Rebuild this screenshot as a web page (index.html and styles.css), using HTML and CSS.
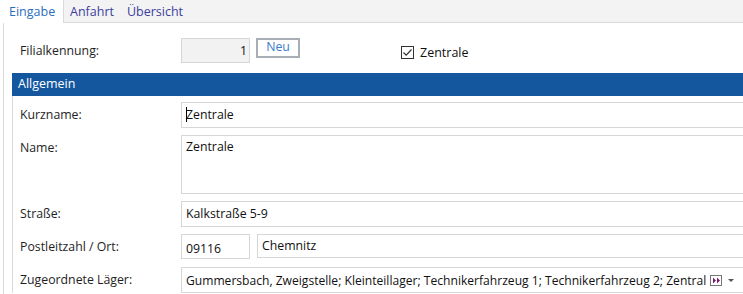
FILE: index.html
```html
<!DOCTYPE html>
<html>
    <head>
        <meta charset="utf-8">
        <title>Filiale</title>
        <link rel="stylesheet" href="styles.css">
    </head>
    <body>
        <nav class="tabs">
            <span class="tab active">Eingabe</span>
            <span class="tab">Anfahrt</span>
            <span class="tab">Übersicht</span>
        </nav>

        <div class="page">
            <div class="top-row">
                <label class="label">Filialkennung:</label>
                <div class="field id-field">1</div>
                <button class="btn-new">Neu</button>
                <label class="check">
                    <span class="box">
                        <svg width="11" height="11" viewBox="0 0 11 11"><path d="M1.5 5.5 L4.2 8.2 L9.5 2.5" fill="none" stroke="#333" stroke-width="1.2"/></svg>
                    </span>
                    Zentrale
                </label>
            </div>

            <section class="group">
                <h2 class="group-title">Allgemein</h2>
                <div class="group-body">
                    <label class="label">Kurzname:</label>
                    <div class="field"><span class="caret"></span>Zentrale</div>

                    <label class="label label-top">Name:</label>
                    <div class="field area">Zentrale</div>

                    <label class="label">Straße:</label>
                    <div class="field">Kalkstraße 5-9</div>

                    <label class="label">Postleitzahl / Ort:</label>
                    <div class="split">
                        <div class="field plz">09116</div>
                        <div class="field ort">Chemnitz</div>
                    </div>

                    <label class="label">Zugeordnete Läger:</label>
                    <div class="field combo">
                        <span class="combo-text">Gummersbach, Zweigstelle; Kleinteillager; Technikerfahrzeug 1; Technikerfahrzeug 2; Zentral</span>
                        <span class="more">
                            <svg width="9" height="7" viewBox="0 0 9 7"><path d="M1 0.5 L4 3.5 L1 6.5 Z M5 0.5 L8 3.5 L5 6.5 Z" fill="#7a1f6e"/></svg>
                        </span>
                        <span class="arrow"></span>
                    </div>
                </div>
            </section>
        </div>
    </body>
</html>
```

FILE: styles.css
```css
body {
    margin: 0; padding: 0;
    background: #FFFFFF;
    color: #1E1E1E;
    font-family: "Segoe UI", "Open Sans", "Noto Sans", sans-serif;
    font-size: 12.3px;
    overflow: hidden;
}

.tabs {
    display: flex;
    height: 22px;
    background: #F3F3F3;
    border-bottom: 1px solid #DADADA;
}
.tab {
    padding: 3px 7px 0 6px;
    color: #3B3D9E;
    line-height: 17px;
    font-size: 12.5px;
}
.tab.active {
    width: 54px;
    padding: 3px 0 0 9px;
    background: #FFFFFF;
    color: #2A6DBB;
    border-right: 1px solid #DADADA;
    height: 20px;
    margin-bottom: -1px;
}

.page {
    margin-left: 3px;
    border-left: 1px solid #DADADA;
    height: 272px;
}

.top-row {
    display: flex;
    align-items: flex-start;
    padding: 15px 0 0 16px;
    height: 35px;
}
.top-row .label {
    width: 161px;
    line-height: 25px;
}
.field {
    box-sizing: border-box;
    height: 26px;
    border: 1px solid #D6D6D6;
    border-right: none;
    background: #FFFFFF;
    color: #111111;
    padding: 0 4px;
    line-height: 23px;
    white-space: nowrap;
    overflow: hidden;
}
.id-field {
    width: 69px;
    height: 25px;
    background: #F2F2F2;
    border-right: 1px solid #D6D6D6;
    text-align: right;
    padding-right: 2px;
}
.btn-new {
    margin-left: 6px;
    width: 44px;
    height: 20px;
    padding: 0 0 2px 0;
    border: 2px solid #A9AEB6;
    background: #FFFFFF;
    color: #3A7BCB;
    font: inherit;
    line-height: 14px;
}
.check {
    display: flex;
    align-items: center;
    gap: 6px;
    margin-left: 101px;
    margin-top: 6px;
    color: #111111;
    font-size: 12.5px;
}
.box {
    box-sizing: border-box;
    width: 13px;
    height: 13px;
    border: 1px solid #333333;
    display: flex;
    align-items: center;
    justify-content: center;
}

.group { margin-left: 8px; }
.group-title {
    margin: 0;
    height: 23px;
    padding-left: 6px;
    background: #14579F;
    color: #FFFFFF;
    font-weight: 400;
    font-size: 12.5px;
    line-height: 22px;
}
.group-body {
    border-left: 1px solid #DADADA;
    display: grid;
    grid-template-columns: 161px 1fr;
    row-gap: 7px;
    padding: 6px 0 0 7px;
}
.group-body .label {
    line-height: 26px;
}
.group-body .label-top { line-height: 26px; align-self: start; }
.area {
    height: 59px;
    padding-top: 0;
    line-height: 22px;
}
.caret {
    display: inline-block;
    width: 1px;
    height: 15px;
    background: #000000;
    vertical-align: -3px;
    margin-right: -1px;
}
.split {
    display: flex;
    gap: 7px;
}
.plz {
    width: 69px;
    height: 25px;
    border-right: 1px solid #D6D6D6;
    padding-top: 2px;
}
.ort {
    flex: 1;
    height: 24px;
    line-height: 21px;
}
.combo {
    display: flex;
    align-items: center;
}
.combo-text {
    flex: none;
    font-size: 12.1px;
}
.more {
    box-sizing: border-box;
    width: 12px;
    height: 11px;
    border: 1px solid #777777;
    display: flex;
    align-items: center;
    justify-content: center;
    margin-left: 4px;
}
.arrow {
    margin-left: 6px;
    border-left: 3px solid transparent;
    border-right: 3px solid transparent;
    border-top: 3px solid #555555;
    margin-top: 1px;
}
```
